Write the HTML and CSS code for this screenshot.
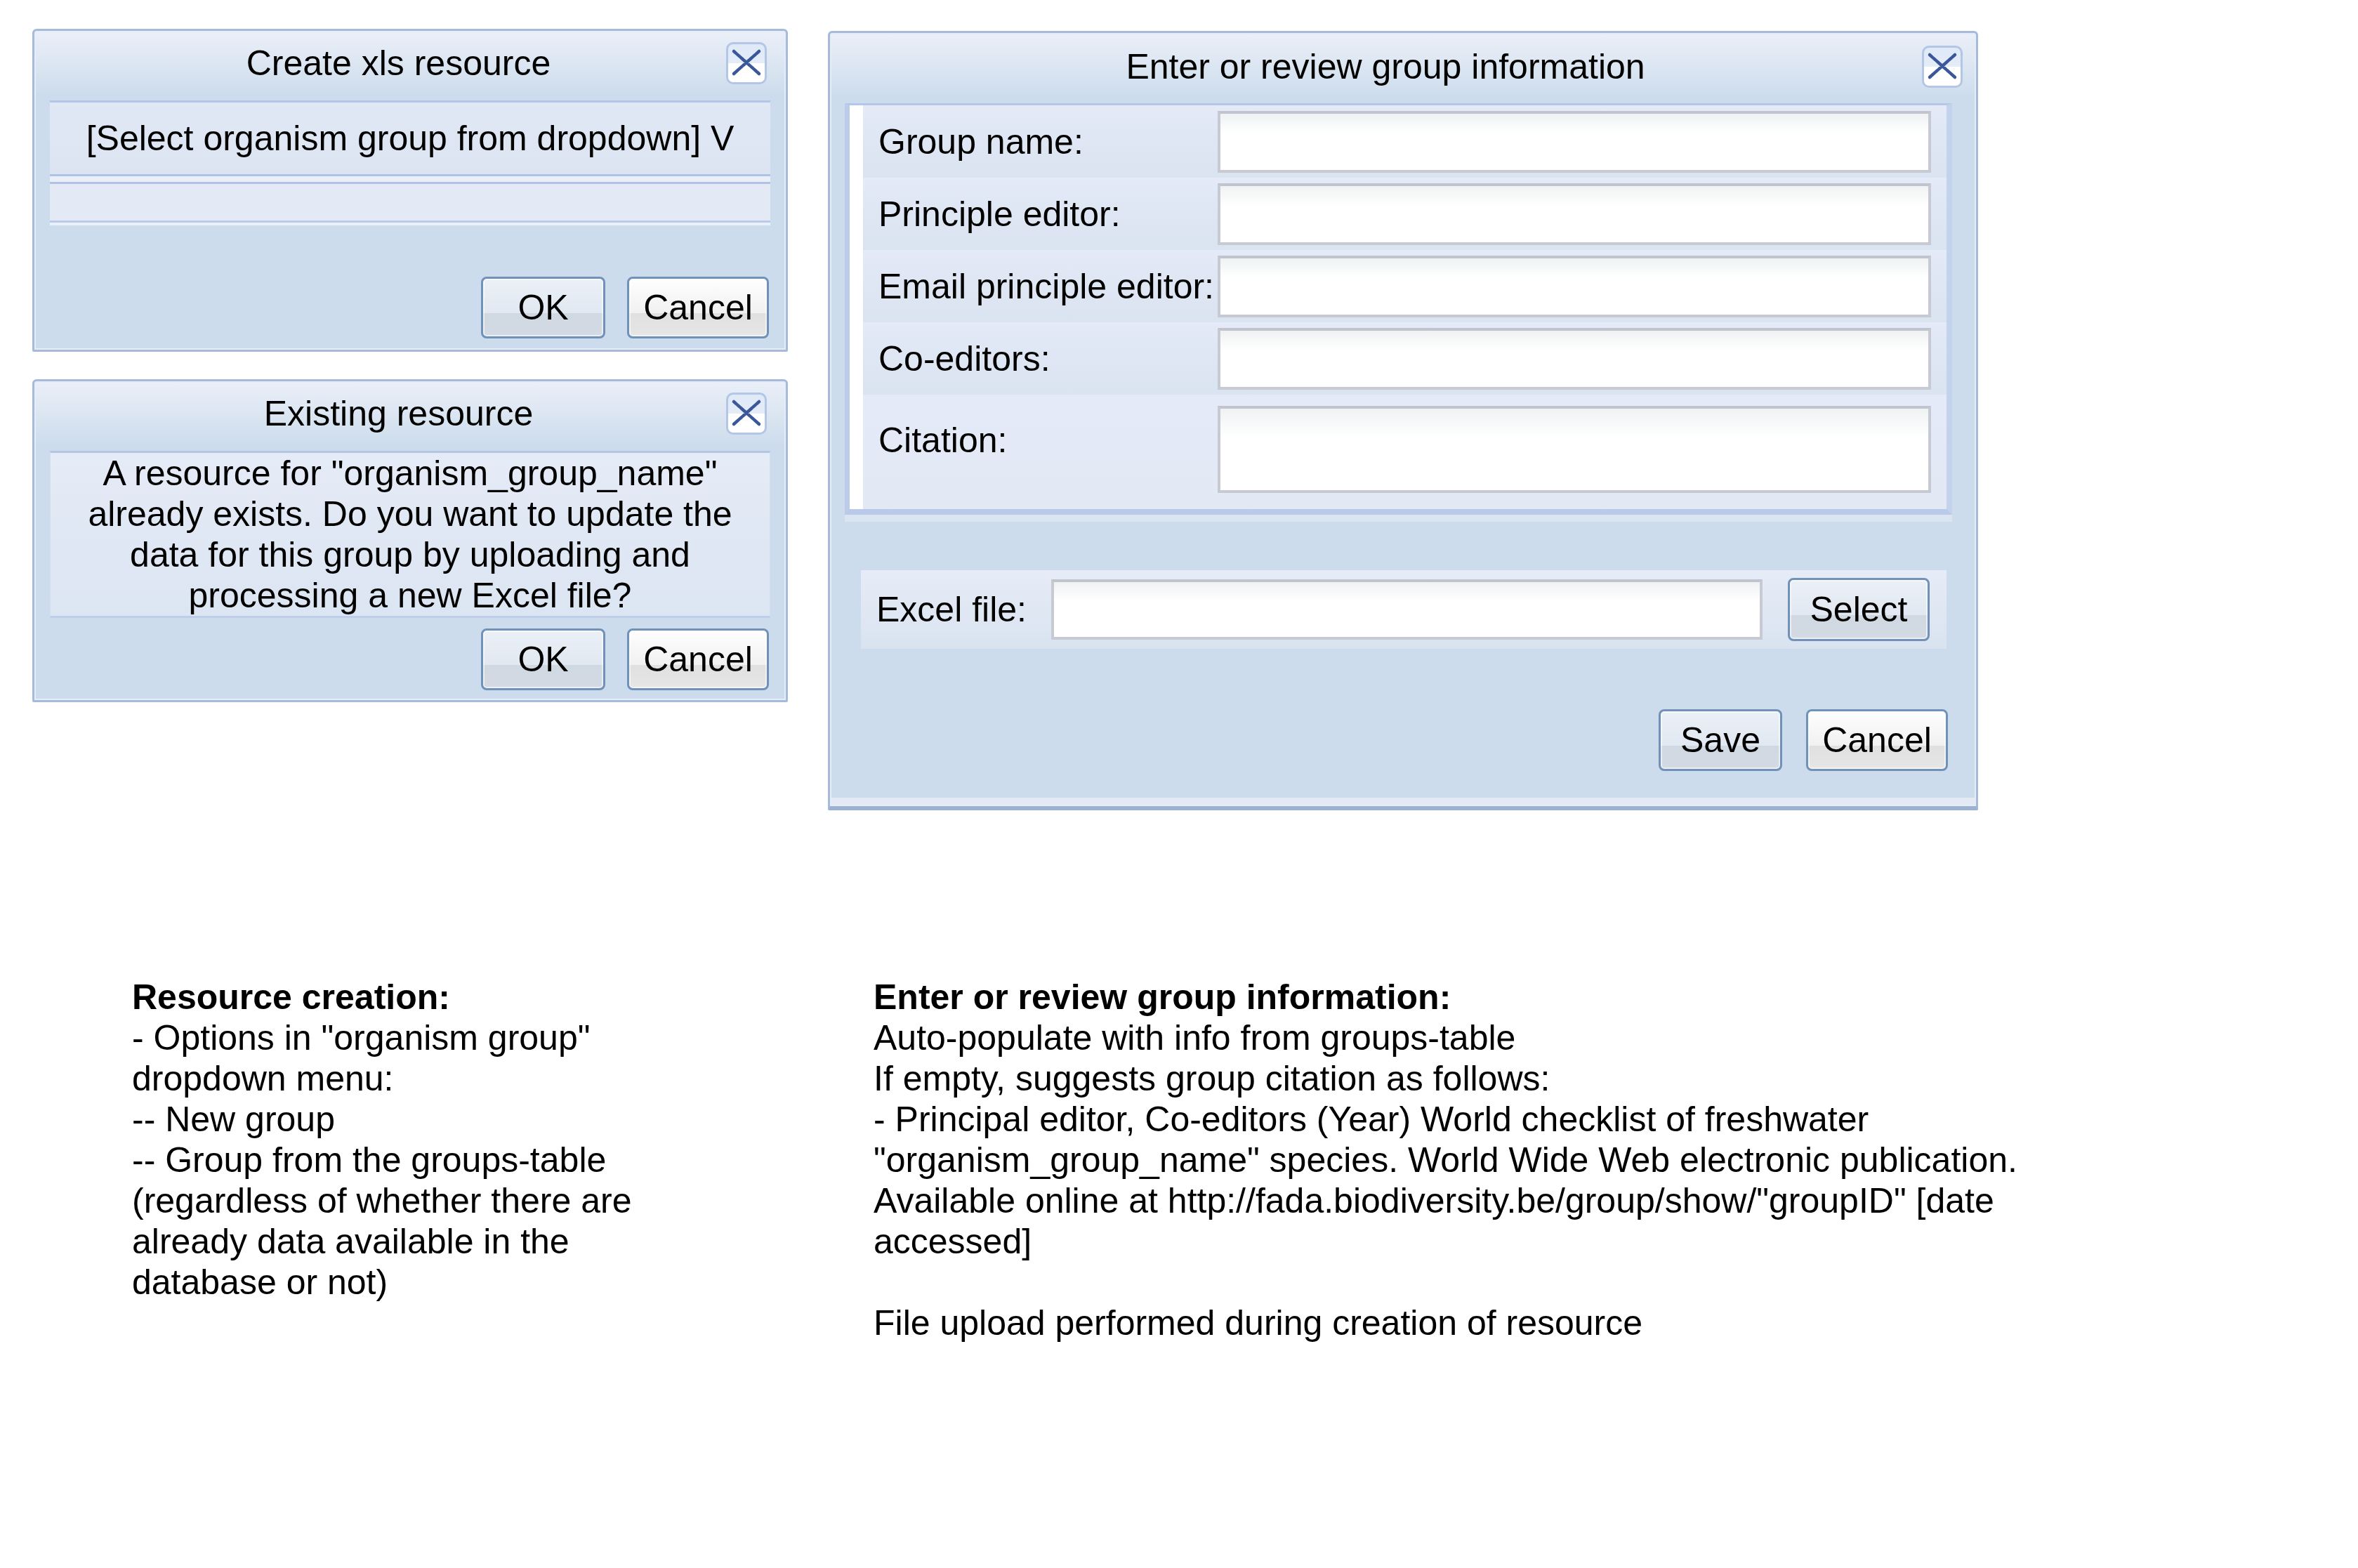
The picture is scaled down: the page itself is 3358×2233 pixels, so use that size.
FILE: index.html
```html
<!DOCTYPE html>
<html>
<head>
<meta charset="utf-8">
<title>Resource dialogs</title>
<link rel="stylesheet" href="styles.css">
</head>
<body>
<div class="page">
  <div class="top">
    <div class="left-col">
      <section class="dialog dialog-small">
        <header class="titlebar titlebar-small">
          <h1 class="title">Create xls resource</h1>
          <span class="close"><svg class="close-x" viewBox="0 0 52 54" width="52" height="54"><path d="M8 10 L44 42 M44 10 L8 42"/></svg></span>
        </header>
        <div class="panel select-panel">
          <div class="select-row">[Select organism group from dropdown] V</div>
          <div class="empty-row"></div>
        </div>
        <div class="buttons buttons-create">
          <button class="btn btn-blue btn-ok">OK</button>
          <button class="btn btn-white btn-cancel">Cancel</button>
        </div>
      </section>
      <section class="dialog dialog-small">
        <header class="titlebar titlebar-small">
          <h1 class="title">Existing resource</h1>
          <span class="close"><svg class="close-x" viewBox="0 0 52 54" width="52" height="54"><path d="M8 10 L44 42 M44 10 L8 42"/></svg></span>
        </header>
        <div class="panel message-panel">
          <p class="message">A resource for "organism_group_name" already exists. Do you want to update the data for this group by uploading and processing a new Excel file?</p>
        </div>
        <div class="buttons buttons-existing">
          <button class="btn btn-blue btn-ok">OK</button>
          <button class="btn btn-white btn-cancel">Cancel</button>
        </div>
      </section>
    </div>
    <section class="dialog dialog-large">
      <header class="titlebar titlebar-large">
        <h1 class="title">Enter or review group information</h1>
        <span class="close"><svg class="close-x" viewBox="0 0 52 54" width="52" height="54"><path d="M8 10 L44 42 M44 10 L8 42"/></svg></span>
      </header>
      <div class="form-panel">
        <div class="form-row"><span class="form-label">Group name:</span><div class="input"></div></div>
        <div class="form-row"><span class="form-label">Principle editor:</span><div class="input"></div></div>
        <div class="form-row"><span class="form-label">Email principle editor:</span><div class="input"></div></div>
        <div class="form-row"><span class="form-label">Co-editors:</span><div class="input"></div></div>
        <div class="form-row form-row-tall"><span class="form-label">Citation:</span><div class="input input-tall"></div></div>
      </div>
      <div class="file-row">
        <span class="file-label">Excel file:</span>
        <div class="input file-input"></div>
        <button class="btn btn-blue btn-select">Select</button>
      </div>
      <div class="buttons buttons-group">
        <button class="btn btn-blue btn-save">Save</button>
        <button class="btn btn-white btn-cancel">Cancel</button>
      </div>
      <div class="dialog-foot"></div>
    </section>
  </div>
  <div class="notes">
    <div class="note note-a">
      <p class="note-head">Resource creation:</p>
      <p>- Options in "organism group" dropdown menu:</p>
      <p>-- New group</p>
      <p>-- Group from the groups-table (regardless of whether there are already data available in the database or not)</p>
    </div>
    <div class="note note-b">
      <p class="note-head">Enter or review group information:</p>
      <p>Auto-populate with info from groups-table</p>
      <p>If empty, suggests group citation as follows:</p>
      <p>- Principal editor, Co-editors (Year) World checklist of freshwater "organism_group_name" species. World Wide Web electronic publication. Available online at http://fada.biodiversity.be/group/show/"groupID" [date accessed]</p>
      <p class="note-gap"></p>
      <p>File upload performed during creation of resource</p>
    </div>
  </div>
</div>
</body>
</html>
```

FILE: styles.css
```css
* {
  box-sizing: border-box;
}

html,
body {
  margin: 0;
  padding: 0;
  background: #ffffff;
}

body {
  font-family: "Liberation Sans", Arial, Helvetica, sans-serif;
  font-size: 50px;
  color: #000000;
}

.page {
  padding: 41px 0 0 46px;
}

.top {
  display: flex;
  align-items: flex-start;
  gap: 57px;
}

.left-col {
  display: flex;
  flex-direction: column;
  gap: 39px;
  width: 1076px;
}

/* ---------- dialog frame ---------- */
.dialog {
  display: flex;
  flex-direction: column;
  background: #cddcec;
  border: 3px solid #a6bbdb;
  border-radius: 6px 6px 2px 2px;
  padding: 2px;
  box-shadow: inset 0 0 0 2px #e6edf6;
}

.dialog-small {
  width: 1076px;
  height: 460px;
}

.dialog-large {
  width: 1638px;
  margin-top: 3px;
  border-bottom: 6px solid #9db2d3;
}

.titlebar {
  display: flex;
  align-items: flex-start;
  background: linear-gradient(180deg, #eaeff8 0%, #dce6f2 45%, #cddcec 92%);
}

.titlebar-small {
  height: 97px;
  padding: 14px 25px 0 50px;
}

.titlebar-large {
  height: 98px;
  padding: 16px 17px 0 25px;
}

.title {
  flex: 1;
  margin: 1px 0 0;
  font-size: 50px;
  font-weight: normal;
  line-height: 58px;
  text-align: center;
  white-space: nowrap;
}

.close {
  display: flex;
  width: 58px;
  height: 60px;
  border: 3px solid #b3c6e6;
  border-radius: 10px;
  background: linear-gradient(180deg, #e0e9f7 0%, #e4ecf8 50%, #ffffff 50%, #ffffff 100%);
}

.close-x path {
  fill: none;
  stroke: #3a5899;
  stroke-width: 4.5;
  stroke-linecap: round;
  stroke-dasharray: 5 1.5;
}

/* ---------- small dialog panels ---------- */
.panel {
  margin: 0 20px;
}

.select-panel {
  background: #ebf0f8;
  border-top: 3px solid #b3c6e8;
  padding-bottom: 4px;
}

.select-row {
  height: 105px;
  display: flex;
  align-items: center;
  justify-content: center;
  background: linear-gradient(180deg, #e1e8f5, #dce4f2);
  border-bottom: 3px solid #afc3e6;
  white-space: nowrap;
}

.empty-row {
  margin-top: 8px;
  height: 58px;
  background: #e3eaf6;
  border-top: 3px solid #afc3e6;
  border-bottom: 3px solid #bacbea;
}

.message-panel {
  height: 238px;
  background: linear-gradient(180deg, #e5ebf7, #dce5f2);
  border-top: 3px solid #b3c6e8;
  border-bottom: 3px solid #bdcdea;
  border-left: 1px solid #d3ddef;
  border-right: 1px solid #d3ddef;
  padding: 0 32px;
}

.message {
  margin: 0;
  line-height: 58px;
  text-align: center;
}

/* ---------- buttons ---------- */
.buttons {
  display: flex;
  justify-content: flex-end;
  gap: 31px;
  padding-right: 22px;
}

.buttons-create {
  margin-top: 73px;
}

.buttons-existing {
  margin-top: 15px;
}

.buttons-group {
  margin-top: 86px;
  padding-right: 38px;
  gap: 34px;
}

.btn {
  height: 88px;
  padding: 0;
  border: 3px solid #7192b8;
  border-radius: 8px;
  font-family: inherit;
  font-size: 50px;
  line-height: 1;
  color: #000000;
  box-shadow: inset 0 0 0 2px rgba(255, 255, 255, 0.55);
}

.btn-blue {
  background: linear-gradient(180deg, #ebf0f7 0%, #e1e8f1 60%, #d0d8e2 60%, #d3dae3 100%);
}

.btn-white {
  background: linear-gradient(180deg, #fefefe 0%, #f1f1f1 60%, #e0e0e0 60%, #e6e6e6 100%);
}

.btn-ok {
  width: 177px;
}

.btn-cancel {
  width: 202px;
}

.btn-save {
  width: 176px;
}

.btn-select {
  width: 202px;
  height: 90px;
}

/* ---------- form panel ---------- */
.form-panel {
  margin: 0 32px 0 19px;
  background: #ffffff;
  border-top: 3px solid #b5c7e8;
  border-left: 7px solid #bccbe7;
  border-right: 8px solid #c4d3ec;
  border-bottom: 8px solid #b9c9e9;
  padding-left: 19px;
  box-shadow: 0 10px 0 #dbe4f1;
}

.form-row {
  display: flex;
  align-items: center;
  height: 103px;
  padding: 0 22px;
  background: linear-gradient(180deg, #e4eaf7 0%, #dae3f0 100%);
}

.form-row-tall {
  height: 163px;
  align-items: flex-start;
  background: linear-gradient(180deg, #e4eaf7 0%, #e2e9f5 100%);
}

.form-label {
  width: 483px;
  flex: none;
  line-height: 58px;
  white-space: nowrap;
}

.form-row-tall .form-label {
  margin-top: 36px;
}

.input {
  flex: 1;
  height: 88px;
  border: 4px solid #c7c9d3;
  border-top-color: #c1c3cd;
  background: linear-gradient(180deg, #eff2f3 0%, #ffffff 35%);
}

.input-tall {
  height: 124px;
  margin-top: 16px;
}

/* ---------- file row ---------- */
.file-row {
  display: flex;
  align-items: center;
  height: 112px;
  margin: 79px 40px 0 42px;
  padding: 0 24px 0 22px;
  background: linear-gradient(180deg, #e6ecf7 0%, #d9e3f0 100%);
}

.file-label {
  margin-right: 35px;
  white-space: nowrap;
}

.file-input {
  height: 86px;
  margin-right: 36px;
}

.dialog-foot {
  height: 10px;
  margin-top: 38px;
  background: #e3eaf4;
}

/* ---------- notes ---------- */
.notes {
  display: flex;
  margin-top: 237px;
  padding-left: 142px;
}

.note p {
  margin: 0;
  line-height: 58px;
}

.note-head {
  font-weight: bold;
}

.note-gap {
  height: 58px;
}

.note-a {
  width: 740px;
  margin-right: 316px;
}

.note-b {
  width: 1700px;
}
```
